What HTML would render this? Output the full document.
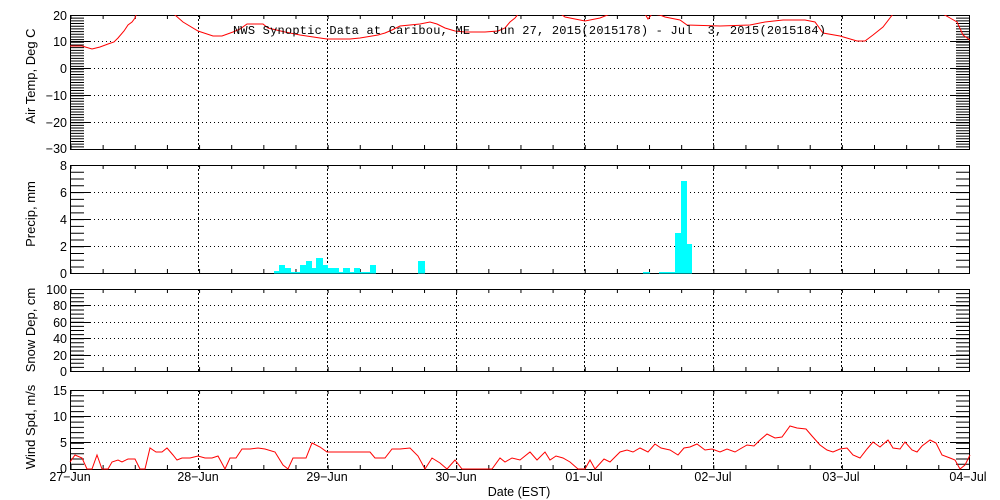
<!DOCTYPE html>
<html><head><meta charset="utf-8"><style>
html,body{margin:0;padding:0;background:#fff;}
svg{display:block;}
text{font-family:"Liberation Sans",sans-serif;font-size:12.5px;fill:#000;}
.t{font-family:"Liberation Mono",monospace;font-size:12px;}
.yl{font-size:13px;}
</style></head><body>
<svg width="1000" height="500" viewBox="0 0 1000 500" xmlns="http://www.w3.org/2000/svg">
<defs>
<clipPath id="c1"><rect x="70" y="15" width="900" height="134"/></clipPath>
</defs>
<g stroke="#000" fill="none" stroke-width="1">
<g stroke-dasharray="2 2">
<path d="M198.5 15V149M327.5 15V149M456.5 15V149M584.5 15V149M713.5 15V149M841.5 15V149"/>
<path d="M198.5 165V273M327.5 165V273M456.5 165V273M584.5 165V273M713.5 165V273M841.5 165V273"/>
<path d="M198.5 289V371M327.5 289V371M456.5 289V371M584.5 289V371M713.5 289V371M841.5 289V371"/>
<path d="M198.5 390V469M327.5 390V469M456.5 390V469M584.5 390V469M713.5 390V469M841.5 390V469"/>
</g>
<g stroke-dasharray="1 3">
<path d="M70 41.5H970M70 68.5H970M70 95.5H970M70 122.5H970"/>
<path d="M70 192.5H970M70 219.5H970M70 246.5H970"/>
<path d="M70 305.5H970M70 322.5H970M70 338.5H970M70 355.5H970"/>
<path d="M70 416.5H970M70 442.5H970"/>
</g>
<g stroke-width="14">
<line x1="77" y1="15" x2="77" y2="150" stroke-dasharray="1 1.68"/>
<line x1="963" y1="15" x2="963" y2="150" stroke-dasharray="1 1.68"/>
<line x1="77" y1="165" x2="77" y2="274" stroke-dasharray="1 5.77"/>
<line x1="963" y1="165" x2="963" y2="274" stroke-dasharray="1 5.77"/>
<line x1="77" y1="289" x2="77" y2="372" stroke-dasharray="1 3.1"/>
<line x1="963" y1="289" x2="963" y2="372" stroke-dasharray="1 3.1"/>
<line x1="77" y1="390" x2="77" y2="470" stroke-dasharray="1 4.27"/>
<line x1="963" y1="390" x2="963" y2="470" stroke-dasharray="1 4.27"/>
</g>
<path d="M70 41.5h20M70 68.5h20M70 95.5h20M70 122.5h20M950 41.5h20M950 68.5h20M950 95.5h20M950 122.5h20"/>
<path d="M70 192.5h20M70 219.5h20M70 246.5h20M950 192.5h20M950 219.5h20M950 246.5h20"/>
<path d="M70 305.5h20M70 322.5h20M70 338.5h20M70 355.5h20M950 305.5h20M950 322.5h20M950 338.5h20M950 355.5h20"/>
<path d="M70 416.5h20M70 442.5h20M950 416.5h20M950 442.5h20"/>
<g stroke-width="4" stroke-dasharray="1 31.14">
<line x1="70.5" y1="17" x2="970" y2="17"/><line x1="70.5" y1="147" x2="970" y2="147"/>
<line x1="70.5" y1="167" x2="970" y2="167"/><line x1="70.5" y1="271" x2="970" y2="271"/>
<line x1="70.5" y1="291" x2="970" y2="291"/><line x1="70.5" y1="369" x2="970" y2="369"/>
<line x1="70.5" y1="392" x2="970" y2="392"/><line x1="70.5" y1="467" x2="970" y2="467"/>
</g>
<rect x="70.5" y="15.5" width="899" height="134"/>
<rect x="70.5" y="165.5" width="899" height="108"/>
<rect x="70.5" y="289.5" width="899" height="82"/>
<rect x="70.5" y="390.5" width="899" height="79"/>
</g>
<polyline clip-path="url(#c1)" fill="none" stroke="#f00" stroke-width="1" points="70,46 82,46 92,49 100,47 108,44 114,42 118,38 124,31 128,25 132,22 135,18 137,12 170,12 175,15 183,22 198,31 213,36 222,36 233,32 240,29 247,24 263,24 268,28 285,32 300,35 320,38 327,39 350,39 360,38 378,35 385,33 392,30 400,26 410,25 420,24 430,22 437,24 445,28 455,31 465,32 485,32 498,31 505,28 510,22 515,18 520,12 558,12 565,17 580,20 585,21 595,19 600,18 610,14 645,14 648,19 652,14 660,15 665,17 680,20 687,25 720,26 750,25 765,22 783,20 805,20 815,22 823,33 840,36 857,41 865,41 873,35 883,27 893,14 943,14 950,18 957,22 963,35 970,40"/>
<g fill="#0ff">
<rect x="274" y="271" width="5" height="2.5"/><rect x="279" y="265" width="6" height="8.5"/><rect x="285" y="268" width="6" height="5.5"/><rect x="291" y="272" width="9" height="1.5"/><rect x="300" y="265" width="6" height="8.5"/><rect x="306" y="261" width="6" height="12.5"/><rect x="312" y="268" width="4" height="5.5"/><rect x="316" y="258" width="7" height="15.5"/><rect x="323" y="265" width="5" height="8.5"/><rect x="328" y="268" width="11" height="5.5"/><rect x="339" y="272" width="4" height="1.5"/><rect x="343" y="268" width="7" height="5.5"/><rect x="350" y="272" width="4" height="1.5"/><rect x="354" y="268" width="6" height="5.5"/><rect x="360" y="272" width="10" height="1.5"/><rect x="370" y="265" width="6" height="8.5"/><rect x="418" y="261" width="7" height="12.5"/>
<rect x="643" y="272" width="7" height="1.5"/><rect x="659" y="272" width="16" height="1.5"/><rect x="675" y="233" width="6" height="40.5"/><rect x="681" y="181" width="6" height="92.5"/><rect x="687" y="244" width="5" height="29.5"/>
</g>
<polyline fill="none" stroke="#f00" stroke-width="1" points="70,462 75,455 82,458 87,469 92,469 97,455 102,469 108,469 112,462 118,460 122,462 128,459 135,459 140,469 145,469 150,448 156,452 162,452 167,448 173,455 177,460 182,458 190,458 198,456 205,458 212,458 218,456 225,469 230,458 236,458 242,449 250,449 258,448 265,449 275,452 283,465 288,469 293,458 300,458 306,458 312,443 320,447 327,452 340,452 370,452 375,458 385,458 392,449 400,449 410,448 418,456 425,469 432,458 440,463 447,469 455,460 462,469 492,469 500,458 505,462 512,458 520,460 530,452 537,460 545,452 550,460 556,456 563,458 570,462 578,469 585,469 590,460 595,469 604,459 610,462 620,452 627,450 633,452 640,448 648,452 655,444 661,448 670,450 678,455 684,448 690,447 697,444 705,450 712,449 720,452 727,449 735,452 740,449 747,445 754,446 760,440 767,434 775,438 782,437 790,426 797,428 806,429 812,436 820,445 827,450 833,452 840,449 847,448 853,455 860,458 867,449 873,442 880,447 888,440 893,448 900,449 905,442 912,450 917,452 922,446 930,440 936,443 942,455 950,458 955,460 960,469 965,465 970,455"/>
<text class="t" x="233" y="34" textLength="593" lengthAdjust="spacing" xml:space="preserve">NWS Synoptic Data at Caribou, ME   Jun 27, 2015(2015178) - Jul  3, 2015(2015184)</text>
<g text-anchor="end">
<text x="67" y="20">20</text><text x="67" y="46">10</text><text x="67" y="73">0</text><text x="67" y="100">−10</text><text x="67" y="127">−20</text><text x="67" y="153">−30</text>
<text x="67" y="170">8</text><text x="67" y="197">6</text><text x="67" y="224">4</text><text x="67" y="251">2</text><text x="67" y="278">0</text>
<text x="67" y="294">100</text><text x="67" y="310">80</text><text x="67" y="327">60</text><text x="67" y="343">40</text><text x="67" y="360">20</text><text x="67" y="376">0</text>
<text x="67" y="395">15</text><text x="67" y="421">10</text><text x="67" y="447">5</text><text x="67" y="473">0</text>
</g>
<g text-anchor="middle">
<text x="70" y="481">27−Jun</text><text x="198" y="481">28−Jun</text><text x="327" y="481">29−Jun</text><text x="456" y="481">30−Jun</text><text x="584" y="481">01−Jul</text><text x="713" y="481">02−Jul</text><text x="841" y="481">03−Jul</text><text x="968" y="481">04−Jul</text>
<text x="519" y="496">Date (EST)</text>
<text class="yl" transform="translate(35,76) rotate(-90)">Air Temp, Deg C</text>
<text class="yl" transform="translate(35,214) rotate(-90)">Precip, mm</text>
<text class="yl" transform="translate(35,330) rotate(-90)">Snow Dep, cm</text>
<text class="yl" transform="translate(35,427) rotate(-90)">Wind Spd, m/s</text>
</g>
</svg>
</body></html>
